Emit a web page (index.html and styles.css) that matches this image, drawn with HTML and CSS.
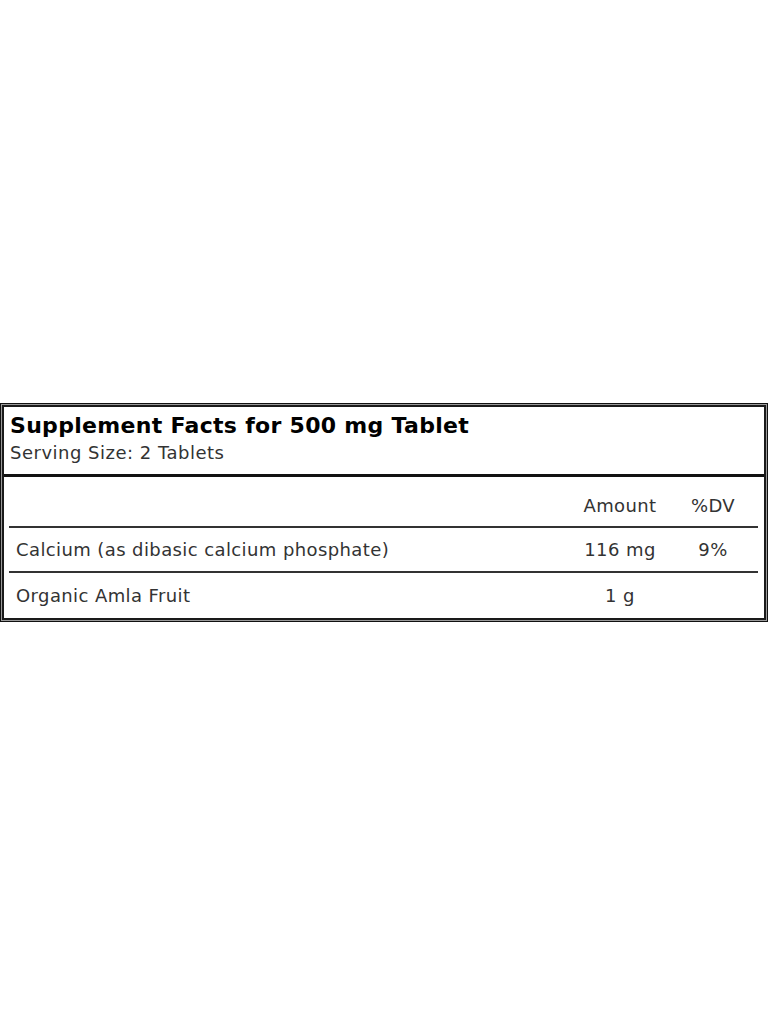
FILE: index.html
```html
<!DOCTYPE html>
<html>
<head>
<meta charset="utf-8">
<link rel="stylesheet" href="styles.css">
</head>
<body>
<div class="page">
  <div class="frame">
    <div class="facts">
      <div class="head">
        <div class="title">Supplement Facts for 500 mg Tablet</div>
        <div class="serving">Serving Size: 2 Tablets</div>
      </div>
      <div class="rows">
        <div class="row row-top">
          <div class="name"></div>
          <div class="amt">Amount</div>
          <div class="dv">%DV</div>
        </div>
        <div class="row">
          <div class="name">Calcium (as dibasic calcium phosphate)</div>
          <div class="amt">116 mg</div>
          <div class="dv">9%</div>
        </div>
        <div class="row row-last">
          <div class="name">Organic Amla Fruit</div>
          <div class="amt">1 g</div>
          <div class="dv"></div>
        </div>
      </div>
    </div>
  </div>
</div>
</body>
</html>
```

FILE: styles.css
```css
html, body {
  margin: 0;
  padding: 0;
  background: #fff;
}
body {
  font-family: "DejaVu Sans", Verdana, sans-serif;
  color: #333;
}
.page {
  min-height: 100vh;
  display: flex;
  flex-direction: column;
  justify-content: center;
}
.frame {
  border: 1px solid #111;
  padding: 1px;
  background: #9a9a9a;
}
.facts {
  border: 2px solid #1a1a1a;
  background: #fff;
}
.head {
  padding: 6px 6px 9px;
  border-bottom: 3px solid #111;
}
.title {
  font-weight: bold;
  font-size: 22px;
  line-height: 26px;
  letter-spacing: 0.3px;
  color: #000;
}
.serving {
  font-size: 18px;
  line-height: 24px;
  letter-spacing: 0.5px;
  color: #333;
  margin-top: 2px;
}
.rows {
  padding: 0 6px 0 5px;
}
.row {
  display: flex;
  align-items: center;
  font-size: 18px;
  letter-spacing: 0.4px;
  height: 43px;
  border-bottom: 2px solid #333;
}
.row-top {
  box-sizing: border-box;
  padding-top: 8px;
  height: 51px;
}
.row-last {
  border-bottom: none;
  height: 45px;
}
.name {
  flex: 1;
  padding-left: 7px;
}
.amt {
  width: 96px;
  text-align: center;
}
.dv {
  width: 90px;
  text-align: center;
}
```
